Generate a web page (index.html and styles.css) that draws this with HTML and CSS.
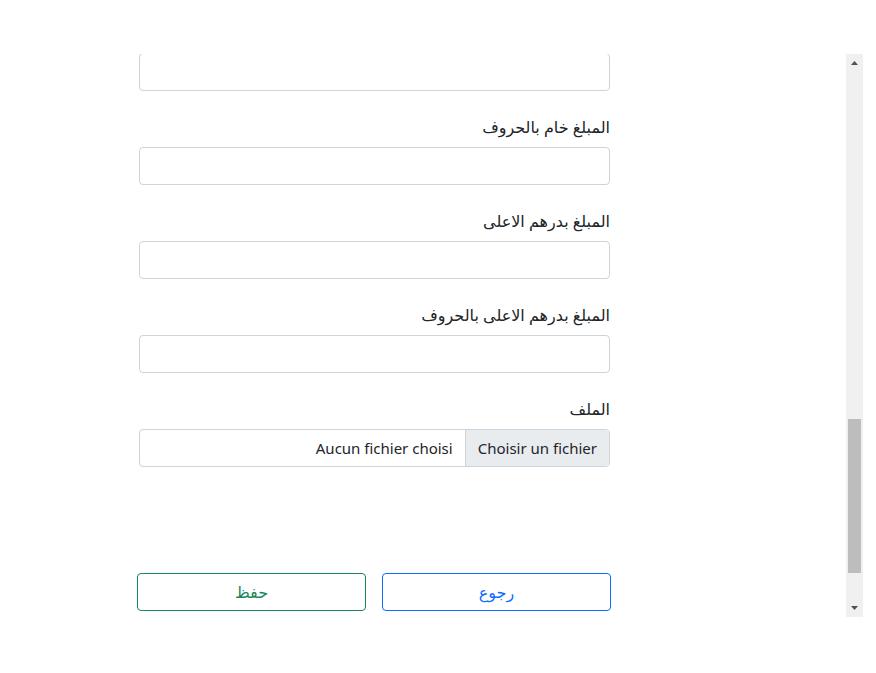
FILE: index.html
```html
<!DOCTYPE html>
<html lang="ar">
<head>
<meta charset="utf-8">
<title>Form</title>
<link rel="stylesheet" href="styles.css">
</head>
<body>
<div class="page">
  <div class="panel">
    <div class="scroll-area" id="scrollArea">
      <form class="form" dir="rtl">
        <div class="field"><label class="label">رقم الصفقة</label><input class="control" type="text"></div>
        <div class="field"><label class="label">تاريخ الصفقة</label><input class="control" type="text"></div>
        <div class="field"><label class="label">الموضوع</label><input class="control" type="text"></div>
        <div class="field"><label class="label">نوع الصفقة</label><input class="control" type="text"></div>
        <div class="field"><label class="label">المصلحة</label><input class="control" type="text"></div>
        <div class="field"><label class="label">المقاول</label><input class="control" type="text"></div>
        <div class="field"><label class="label">العنوان</label><input class="control" type="text"></div>
        <div class="field"><label class="label">رقم السجل التجاري</label><input class="control" type="text"></div>
        <div class="field"><label class="label">الميزانية</label><input class="control" type="text"></div>
        <div class="field"><label class="label">الفصل</label><input class="control" type="text"></div>
        <div class="field"><label class="label">المدة</label><input class="control" type="text"></div>
        <div class="field"><label class="label">تاريخ البدء</label><input class="control" type="text"></div>
        <div class="field"><label class="label">تاريخ الانتهاء</label><input class="control" type="text"></div>
        <div class="field"><label class="label">المبلغ خام</label><input class="control" type="text" id="anchor"></div>
        <div class="field"><label class="label">المبلغ خام بالحروف</label><input class="control" type="text"></div>
        <div class="field"><label class="label">المبلغ بدرهم الاعلى</label><input class="control" type="text"></div>
        <div class="field"><label class="label">المبلغ بدرهم الاعلى بالحروف</label><input class="control" type="text"></div>
        <div class="field">
          <label class="label">الملف</label>
          <div class="file-control">
            <span class="file-button">Choisir un fichier</span>
            <span class="file-name">Aucun fichier choisi</span>
          </div>
        </div>
        <div class="actions">
          <button type="button" class="btn btn-blue">رجوع</button>
          <button type="button" class="btn btn-green">حفظ</button>
        </div>
      </form>
    </div>
    <div class="scrollbar">
      <div class="sb-btn">
        <svg width="17" height="17" viewBox="0 0 17 17"><polygon points="5,11 12,11 8.5,7" fill="#505050"/></svg>
      </div>
      <div class="sb-track" id="track">
        <div class="sb-thumb" id="thumb"></div>
      </div>
      <div class="sb-btn">
        <svg width="17" height="17" viewBox="0 0 17 17"><polygon points="5,6 12,6 8.5,10" fill="#505050"/></svg>
      </div>
    </div>
  </div>
</div>
<script src="script.js"></script>
</body>
</html>
```

FILE: styles.css
```css
html, body {
  margin: 0;
  padding: 0;
  background: #ffffff;
}

body {
  font-family: "Noto Sans", "DejaVu Sans", sans-serif;
  font-size: 16px;
  color: #212529;
}

.page {
  padding-top: 54px;
  padding-left: 13px;
}

.panel {
  display: flex;
  width: 850px;
  height: 563px;
  background: #ffffff;
}

.scroll-area {
  position: relative;
  flex: 1;
  overflow: hidden;
}

.scrollbar {
  display: flex;
  flex-direction: column;
  width: 17px;
  flex: none;
  background: #f0f0f0;
}

.sb-btn {
  height: 17px;
  flex: none;
}

.sb-btn svg {
  display: block;
}

.sb-track {
  flex: 1;
}

.sb-thumb {
  margin: 0 2px;
  background: #bdbdbd;
}

.form {
  width: 471px;
  margin-left: 126px;
  padding-top: 16px;
  padding-bottom: 106px;
}

.field {
  margin-bottom: 24px;
}

.label {
  display: block;
  line-height: 24px;
  margin-bottom: 8px;
  text-align: right;
}

.control {
  display: block;
  box-sizing: border-box;
  width: 100%;
  height: 38px;
  margin: 0;
  padding: 6px 12px;
  border: 1px solid #ced4da;
  border-radius: 4px;
  background: #ffffff;
  font: inherit;
  color: #212529;
}

.file-control {
  display: flex;
  box-sizing: border-box;
  height: 38px;
  border: 1px solid #ced4da;
  border-radius: 4px;
  overflow: hidden;
  background: #ffffff;
  font-size: 15px;
}

.file-button {
  padding: 6px 12px;
  line-height: 24px;
  background: #e9ecef;
  border-left: 1px solid #ced4da;
  white-space: nowrap;
}

.file-name {
  padding: 6px 12px;
  line-height: 24px;
  white-space: nowrap;
}

.actions {
  display: flex;
  gap: 16px;
  margin-top: 106px;
  margin-left: -2px;
  margin-right: -1px;
}

.btn {
  flex: 1;
  box-sizing: border-box;
  height: 38px;
  padding: 6px 12px;
  border-radius: 4px;
  background: #ffffff;
  font: inherit;
  line-height: 24px;
  cursor: pointer;
}

.btn-blue {
  border: 1px solid #0d6efd;
  color: #0d6efd;
}

.btn-green {
  border: 1px solid #198754;
  color: #198754;
}
```

FILE: script.js
```js
var area = document.getElementById('scrollArea');
var anchor = document.getElementById('anchor');
var track = document.getElementById('track');
var thumb = document.getElementById('thumb');

area.scrollTop = anchor.offsetTop + 1;

var trackLen = track.clientHeight;
var visible = area.clientHeight;
var total = area.scrollHeight;
var thumbLen = Math.round(trackLen * visible / total);
var maxScroll = total - visible;
var thumbTop = maxScroll > 0 ? Math.round(area.scrollTop / maxScroll * (trackLen - thumbLen)) : 0;

thumb.style.height = thumbLen + 'px';
thumb.style.marginTop = thumbTop + 'px';
```
